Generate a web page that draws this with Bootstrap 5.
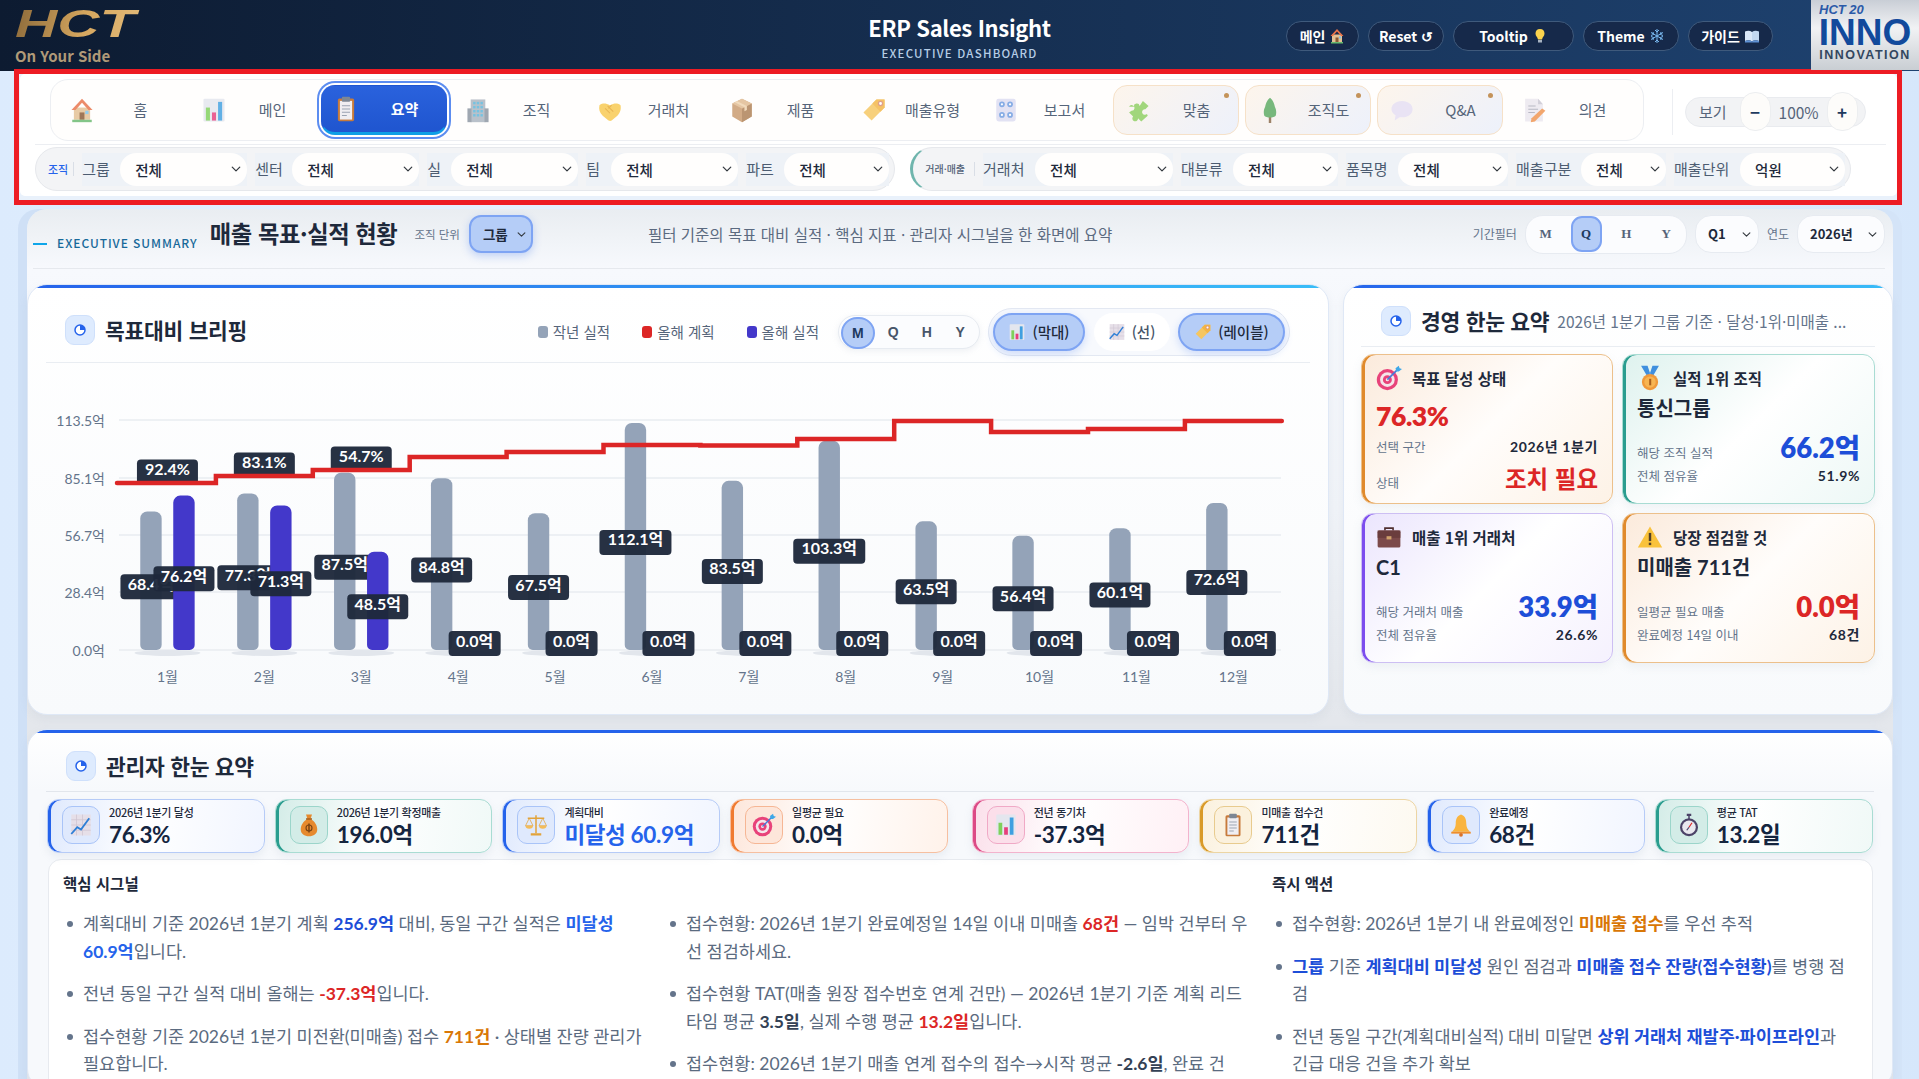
<!DOCTYPE html>
<html lang="ko">
<head>
    <meta charset="UTF-8">
    <title>ERP Sales Insight</title>
    <link href="https://cdn.jsdelivr.net/npm/bootstrap@5.3.0/dist/css/bootstrap.min.css" rel="stylesheet">
    <style>
        html, body { height: 1079px; overflow: hidden; }
        body {
            font-family: "Lato", "Noto Sans CJK KR", sans-serif;
            color: #1e293b;
            background: linear-gradient(90deg, #dcebfd, #e4effd 20%, #e4effd 80%, #d6e7fb);
        }
        /* top bar */
        .topbar { height: 71px; background: linear-gradient(90deg, #0d1b31, #1e4270); color: #fff; }
        .brand-side { flex: 1 1 0; min-width: 0; }
        .hct-word { font: italic 700 39px/28px "Liberation Sans", sans-serif; letter-spacing: 0; background: linear-gradient(100deg, #8c6a3a, #d6a75f 55%, #e3bb7a); -webkit-background-clip: text; background-clip: text; color: transparent; margin: 10px 0 0 15px; width: 84px; transform: scaleX(1.5); transform-origin: left; }
        .hct-sub { font: 700 15px/18px "Noto Sans CJK KR", sans-serif; color: #b09a78; padding-left: 15px; margin-top: 9px; }
        .app-title { font: 700 22px/30px "Noto Sans CJK KR", sans-serif; text-align: center; margin-top: 12px; letter-spacing: -.35px; }
        .app-sub { font: 500 11.5px/14px "Noto Sans CJK KR", sans-serif; letter-spacing: 1.2px; color: #b6cde6; text-align: center; margin-top: 4px; }
        .top-group { gap: 9px; margin-top: 21px; }
        .top-btn { height: 30px; border: 1px solid #3f5a7c; background: #16294a; color: #fff; border-radius: 15px; padding: 0; font: 700 14px/28px "Noto Sans CJK KR", sans-serif; display: flex; align-items: center; gap: 4px; justify-content: center; }
        .top-btn svg { width: 16px; height: 18px; }
        .w73 { width: 73px; } .w76b { width: 76px; } .w121 { width: 121px; } .w96 { width: 96px; } .w85 { width: 85px; }
        .inno-logo { width: 108px; height: 70px; background: linear-gradient(#c9ced6, #f1f2f4 40%, #c9ced3); text-align: center; color: #1b3f8f; margin-left: 38px; }
        .inno-top { font: italic 700 13px/14px "Liberation Sans", sans-serif; text-align: left; padding: 3px 0 0 8px; color: #2b5aa8; }
        .inno-big { font: 800 37px/32px "Liberation Sans", sans-serif; color: #124a9c; letter-spacing: 0; }
        .inno-mid { font: 700 12.5px/13px "Liberation Sans", sans-serif; letter-spacing: 1.5px; color: #33475f; }
        /* toolbar */
        .tool-frame { margin: -2px 17px 0 14px; border: 5px solid #ed1c24; height: 136px; background: #e9f1fb; }
        .tool-panel { height: 122px; margin-left: 1px; background: #fff; border-radius: 5px; }
        .tab-row { height: 70px; padding: 5px 0 0 30px; }
        .tab-wrap { width: 1594px; height: 62px; border: 1px solid #eceef2; border-radius: 18px; padding-left: 6px; gap: 6px; background: #fffefd; }
        .tab-item { width: 126px; height: 50px; border: 1px solid transparent; border-radius: 14px; padding: 0 0 0 11px; display: flex; align-items: center; color: #56657a; font: 400 15px/20px "Noto Sans CJK KR", sans-serif; background: transparent; }
        .tab-item svg { width: 26px; height: 30px; flex: none; opacity: .82; }
        .tab-item span { flex: 1; text-align: center; padding-left: 4px; }
        .tab-on { background: linear-gradient(#2a62dd, #1f55cf); color: #fff; font-weight: 700; box-shadow: 0 0 0 2px #fff, 0 0 0 4px #5c8df0; border-bottom: 3px solid #0e9fe6; }
        .tab-on svg { opacity: 1; }
        .tab-soft { background: linear-gradient(135deg, #fdf5ec, #edf1fb); border-color: #f6e1c8; position: relative; }
        .tab-soft::after { content: ""; position: absolute; top: 7px; right: 9px; width: 5px; height: 5px; border-radius: 50%; background: #c4935a; }
        .view-sep { width: 1px; height: 46px; background: #eceef2; margin: 0 12px 0 28px; }
        .view-pill { width: 181px; height: 30px; background: #f2f3f5; border: 1px solid #e9ebef; border-radius: 15px; color: #56657a; font: 400 15px/28px "Noto Sans CJK KR", sans-serif; padding-left: 13px; }
        .view-btn { width: 31px; height: 39px; border-radius: 15px; background: #fdfcfa; border: 1px solid #eceef0; font: 700 17px/1 "Noto Sans CJK KR", sans-serif; color: #1e3a5f; padding: 0; margin-left: 13px; }
        .view-btn.plus { margin-left: 0; }
        .view-val { width: 56px; text-align: center; font-size: 15.5px; }
        .tool-line { height: 1px; background: #eceef2; margin: 0 11px 2px 15px; }
        .filter-row { padding-left: 15px; gap: 15px; }
        .filter-box { height: 44px; background: #f3f4f6; border: 1px solid #e6e8ec; border-radius: 22px; padding: 0 5px 0 12px; gap: 8px; }
        .filter-box.deal { border-left: 3px solid #6fb5ad; }
        .filter-tag { color: #2563eb; font: 500 11px/14px "Noto Sans CJK KR", sans-serif; padding-right: 5px; border-right: 1px solid #d9dee6; white-space: nowrap; }
        .filter-box.deal .filter-tag { color: #56657a; font-size: 10px; padding-right: 9px; }
        .filter-cell { height: 33px; background: #eef2f7; display: flex; align-items: center; color: #4c5c71; font: 400 15px/20px "Noto Sans CJK KR", sans-serif; white-space: nowrap; }
        .filter-cell label { flex: 1; }
        .sel-fill { height: 33px; border: 0; border-radius: 16px; padding: 0 20px 0 15px; font: 500 14.5px/33px "Noto Sans CJK KR", sans-serif; color: #1e293b; background-color: #fffefd; background-position: right 5px center; background-size: 12px 10px; }
        .c165 { width: 165px; } .c164 { width: 164px; } .c151 { width: 151px; } .c152 { width: 152px; } .c143 { width: 143px; }
        .c190 { width: 190px; } .c157 { width: 157px; } .c162 { width: 162px; } .c150 { width: 150px; } .c171 { width: 171px; }
        .s127 { width: 127px; } .s85 { width: 85px; } .s105 { width: 105px; } .s110 { width: 110px; } .s138 { width: 138px; }
        /* main */
        .main-wrap { margin: 4px 26px 0 27px; background: linear-gradient(#e9edf1, #f7f9fd 60px, #f0f3f8 300px, #e4e7ec 510px); border-radius: 20px 20px 0 0; box-shadow: -9px 0 0 #cfe0f6, 9px 0 0 #d4e4f8; height: 870px; }
        .sum-row { height: 60px; margin: 0 8px 0 6px; border-bottom: 1px solid #e6e9ee; padding-bottom: 9px; }
        .sum-eyebrow { font: 500 12px/16px "Noto Sans CJK KR", sans-serif; letter-spacing: .95px; color: #17699a; margin-top: 17px; white-space: nowrap; }
        .sum-eyebrow::before { content: ""; display: inline-block; width: 14px; height: 2px; background: #0ea5e9; vertical-align: middle; margin-right: 10px; }
        .sum-title { font: 700 23.3px/30px "Noto Sans CJK KR", sans-serif; margin: -3px 0 0 12px; letter-spacing: -.4px; white-space: nowrap; }
        .sum-unit { color: #64748b; font: 400 11.5px/16px "Noto Sans CJK KR", sans-serif; margin-left: 17px; white-space: nowrap; }
        .sel-blue { width: 64px; height: 38px; border: 2px solid #7ea4f3; border-radius: 12px; background-color: #b5cdf7; font: 700 13.5px/34px "Noto Sans CJK KR", sans-serif; padding: 0 16px 0 12px; margin-left: 9px; background-position: right 4px center; background-size: 11px 9px; color: #1e293b; box-shadow: 0 3px 8px rgba(37,99,235,.25); }
        .sum-desc { color: #5b6a80; font: 400 15.5px/20px "Noto Sans CJK KR", sans-serif; margin-left: 115px; white-space: nowrap; width: 465px; }
        .sum-right { margin-left: auto; font: 400 12px/16px "Noto Sans CJK KR", sans-serif; color: #64748b; gap: 8px; }
        .seg-round { background: #fbfcfe; border: 1px solid #e7ebf1; border-radius: 18px; padding: 0; height: 39px; width: 162px; align-items: center; }
        .seg-round b { width: 40.5px; height: 34px; text-align: center; font: 700 13px/34px "Liberation Serif", serif; color: #55647a; display: block; }
        .seg-round b.on { flex: none; width: 31px; margin: 0 5px; height: 36px; background: #b5cdf7; border: 2px solid #7ea4f3; border-radius: 11px; line-height: 32px; color: #1e3a5f; }
        .sel-plain { height: 38px; border: 1px solid #e7ebf1; border-radius: 16px; font: 700 13px/36px "Noto Sans CJK KR", sans-serif; padding: 0 20px 0 12px; background-color: #fbfcfe; background-position: right 6px center; background-size: 11px 9px; color: #1e293b; }
        .w64 { width: 64px; } .w88 { width: 88px; }
        .panel-row { padding-top: 15px; gap: 14px; }
        .glass-card { background: linear-gradient(90deg, #2563eb, #38bdf8) top / 100% 3px no-repeat, linear-gradient(#fff, #f8fafc); border: 1px solid #dfe8f6; border-radius: 20px; box-shadow: 0 4px 10px rgba(148,163,184,.12); }
        .chart-card { width: 1302px; height: 431px; }
        .brief-card { width: 550px; height: 431px; }
        .card-top { height: 78px; margin: 0 18px; border-bottom: 1px solid #e9edf2; padding: 13px 20px 0 19px; }
        .pie-box { width: 30px; height: 30px; background: #deebfe; border: 1px solid #cfe0fb; border-radius: 9px; display: flex; align-items: center; justify-content: center; flex: none; }
        .pie-box svg { width: 12px; height: 12px; }
        .card-name { font: 700 21.5px/28px "Noto Sans CJK KR", sans-serif; margin-left: 10px; letter-spacing: -.3px; white-space: nowrap; }
        .legend-it { font: 400 14.5px/18px "Noto Sans CJK KR", sans-serif; color: #56657a; display: flex; align-items: center; gap: 5px; margin-right: 32px; white-space: nowrap; }
        .legend-it i { width: 10px; height: 12px; border-radius: 3px; display: block; }
        .seg-month { width: 142px; height: 34px; border: 1px solid #e7ebf1; border-radius: 17px; padding: 2px; margin: 0 8px 0 -13px; background: #fbfcfe; box-shadow: 0 2px 6px rgba(148,163,184,.15); }
        .seg-month b { width: 33.5px; text-align: center; font: 700 14px/28px "Liberation Sans", sans-serif; color: #475569; display: block; }
        .seg-month b.on { height: 32px; line-height: 28px; background: #b5cdf7; border: 2px solid #7ea4f3; border-radius: 16px; color: #1e3a5f; margin: -1px 2px 0 0; }
        .seg-view { width: 302px; height: 48px; border: 1px solid #e3e8f2; border-radius: 24px; padding: 0 4px; justify-content: space-between; background: #f7f9fd; }
        .view-tog { height: 38px; border-radius: 19px; border: 0; background: #fff; font: 500 14.5px/34px "Noto Sans CJK KR", sans-serif; color: #475569; padding: 0; display: flex; align-items: center; justify-content: center; gap: 6px; }
        .view-tog.on { background: #b5cdf7; border: 2px solid #7ea4f3; color: #1e293b; box-shadow: 0 3px 8px rgba(37,99,235,.2); }
        .view-tog svg { width: 18px; height: 20px; }
        .w92 { width: 92px; } .w76 { width: 76px; } .w107 { width: 107px; }
        .chart-svg { display: block; font-family: "Lato", "Noto Sans CJK KR", sans-serif; }
        .bg-legend-a { background: #94a3b8; } .bg-legend-b { background: #dc2626; } .bg-legend-c { background: #4338ca; }
        .brief-top { height: 62px; margin: 0 17px; border-bottom: 1px solid #e9edf2; padding: 11px 0 0 20px; }
        .brief-sub { font: 400 15.5px/20px "Noto Sans CJK KR", sans-serif; color: #64748b; margin-left: 8px; white-space: nowrap; }
        .tile-grid { display: grid; grid-template-columns: 252px 253px; gap: 9px 9px; padding: 7px 0 0 17px; }
        .tile { height: 150px; border: 1px solid; border-radius: 12px; padding: 10px 14px; box-shadow: 0 4px 10px rgba(148,163,184,.12), inset 3px 0 0 var(--edge); }
        .tile-amber { --edge: #e08a2c; border-color: #ecc08b; background: linear-gradient(135deg, #fbeadb, #fffdfb 50%, #fdf2e6); }
        .tile-teal { --edge: #2a9d8f; border-color: #a9dcd3; background: linear-gradient(135deg, #def2ee, #fff 50%, #edf8f6); }
        .tile-violet { --edge: #7c4dee; border-color: #cdbff3; background: linear-gradient(135deg, #ebe5fd, #fff 50%, #f5f1fe); }
        .tile-head { display: flex; align-items: center; gap: 10px; font: 700 15.5px/24px "Noto Sans CJK KR", sans-serif; height: 26px; }
        .tile-head svg { width: 26px; height: 26px; flex: none; }
        .tile-big { font: 800 26.5px/34px "Lato", "Noto Sans CJK KR", sans-serif; color: #dc2626; margin-top: 8px; letter-spacing: -.4px; }
        .tile-name { font: 700 20px/28px "Lato", "Noto Sans CJK KR", sans-serif; margin-top: 3px; height: 36px; }
        .tile-line { display: flex; justify-content: space-between; align-items: baseline; font: 400 12.5px/16px "Noto Sans CJK KR", sans-serif; color: #64748b; white-space: nowrap; }
        .tile-line b { font: 700 14px/20px "Lato", "Noto Sans CJK KR", sans-serif; color: #1e293b; letter-spacing: .6px; }
        .tile-gap { margin-top: 4px; }
        .tile-line .hot { font: 700 23.5px/34px "Noto Sans CJK KR", sans-serif; color: #dc2626; letter-spacing: 0; }
        .tile-line .num { font: 800 27.5px/36px "Lato", "Noto Sans CJK KR", sans-serif; color: #1d4ed8; letter-spacing: 0; }
        .tile-line .num.red { color: #dc2626; }
        /* admin */
        .admin-card { height: 360px; margin-top: 14px; background: linear-gradient(90deg, #2563eb, #2563eb) top / 100% 3px no-repeat, linear-gradient(#fff, #f7f9fc 60px); }
        .admin-top { height: 62px; margin: 0 18px; border-bottom: 1px solid #e2e6ec; padding: 11px 0 0 20px; }
        .kpi-row { padding: 7px 0 0 19px; gap: 10px; }
        .kpi-box { width: 217.7px; height: 54px; border: 1px solid; border-radius: 12px; padding: 6px 0 0 14px; display: flex; gap: 9px; background: linear-gradient(100deg, var(--tint), #fff 45%, var(--tint2)); box-shadow: inset 3px 0 0 var(--edge), 0 4px 8px rgba(148,163,184,.14); }
        .kpi-gap { margin-left: 14px; }
        .kpi-ico { width: 38px; height: 38px; border-radius: 10px; border: 1px solid var(--edge2); background: var(--tint); display: flex; align-items: center; justify-content: center; flex: none; }
        .kpi-ico svg { width: 24px; height: 28px; }
        .kpi-lab { font: 500 11px/14px "Noto Sans CJK KR", sans-serif; letter-spacing: -.3px; white-space: nowrap; margin-top: -1px; }
        .kpi-val { font: 700 22.5px/26px "Lato", "Noto Sans CJK KR", sans-serif; color: #15253f; white-space: nowrap; letter-spacing: -.35px; margin-top: 3px; }
        .kb { --edge: #2563eb; --edge2: #a9c4f8; --tint: #dfe9fd; --tint2: #f1f5ff; border-color: #b6cbf7; }
        .kt { --edge: #2a9d8f; --edge2: #9bd5ca; --tint: #d3ece7; --tint2: #f0f9f7; border-color: #a9dcd3; }
        .ko { --edge: #f07a30; --edge2: #f6b694; --tint: #fde6da; --tint2: #fff2ea; border-color: #f6bfa0; }
        .kp { --edge: #dc4a86; --edge2: #f0a9c6; --tint: #fbdfea; --tint2: #fff0f5; border-color: #f3b3cd; }
        .ky { --edge: #d99a28; --edge2: #e8cb8e; --tint: #fbf1dd; --tint2: #fdf9f0; border-color: #ecd5a4; }
        .sig-box { margin: 6px 19px 0 20px; height: 260px; background: #fff; border: 1px solid #e7eaef; border-radius: 13px 13px 0 0; padding: 11px 14px 0 14px; }
        .sig-col1 { width: 586px; margin-right: 17px; } .sig-col2 { width: 582px; margin-right: 24px; } .sig-col3 { width: 577px; }
        .sig-name { font: 700 15.5px/24px "Noto Sans CJK KR", sans-serif; height: 25px; color: #1e293b; margin-bottom: 14px; }
        .sig-list { list-style: none; margin: 0; padding: 0 0 0 20px; }
        .sig-list li { position: relative; font: 400 17.5px/27.5px "Lato", "Noto Sans CJK KR", sans-serif; color: #5b6b80; margin-bottom: 15px; }
        .sig-list li::before { content: ""; position: absolute; left: -16px; top: 11px; width: 6px; height: 6px; border-radius: 50%; background: #64748b; }
        .sig-list b { font-weight: 700; }
        .t-blue { color: #1d4ed8; } .t-blue2 { color: #2563eb; } .t-red { color: #dc2626; } .t-or { color: #d97706; } .t-ink { color: #334155; }
    </style>
</head>
<body>
    <svg width="0" height="0" class="d-block" aria-hidden="true">
        <defs>
            <symbol id="i-home" viewBox="0 0 32 32"><rect x="6" y="13" width="20" height="15" fill="#e4c193"/><path d="M16 2 3 16h5l8-9 8 9h5z" fill="#e8734a"/><rect x="13" y="19" width="6" height="9" fill="#8a5a34"/><rect x="20" y="17" width="4" height="4" fill="#7cc3ea"/><rect x="4" y="28" width="24" height="3" fill="#69b96f"/></symbol>
            <symbol id="i-bars" viewBox="0 0 32 32"><rect x="3" y="2" width="26" height="28" rx="1.5" fill="#e4e6ee"/><rect x="6" y="13" width="5" height="16" fill="#7ed05a"/><rect x="13.500" y="19" width="5" height="10" fill="#e63f7c"/><rect x="21" y="6" width="5" height="23" fill="#3f9fe0"/></symbol>
            <symbol id="i-clip" viewBox="0 0 32 32"><rect x="6" y="3" width="20" height="28" rx="2" fill="#c77b3c"/><rect x="8.500" y="6" width="15" height="23" fill="#f0eef2"/><rect x="11" y="1" width="10" height="6" rx="1" fill="#7d8794"/><path d="M11 12h10M11 16h10M11 20h10M11 24h6" stroke="#9aa3b2" stroke-width="1.300"/></symbol>
            <symbol id="i-tower" viewBox="0 0 32 32"><rect x="7" y="3" width="18" height="28" fill="#aab4bf"/><rect x="3" y="14" width="5" height="17" fill="#8b95a1"/><rect x="24" y="14" width="5" height="17" fill="#8b95a1"/><g fill="#59b6dc"><rect x="10" y="6" width="3" height="3"/><rect x="14.500" y="6" width="3" height="3"/><rect x="19" y="6" width="3" height="3"/><rect x="10" y="11" width="3" height="3"/><rect x="14.500" y="11" width="3" height="3"/><rect x="19" y="11" width="3" height="3"/><rect x="10" y="16" width="3" height="3"/><rect x="14.500" y="16" width="3" height="3"/><rect x="19" y="16" width="3" height="3"/><rect x="10" y="21" width="3" height="3"/><rect x="14.500" y="21" width="3" height="3"/><rect x="19" y="21" width="3" height="3"/></g></symbol>
            <symbol id="i-shake" viewBox="0 0 32 32"><path d="M3 10c5-3 8-2 13 0 5-2 8-3 13 0 1 6-1 10-5 14l-6 5c-2 1-4 0-5-1l-6-5C3 19 2 15 3 10z" fill="#f8c94e"/><path d="M10 14l6 6M13 11l7 7M18 10l-4 4" stroke="#e4a52e" stroke-width="1.300" fill="none"/></symbol>
            <symbol id="i-box" viewBox="0 0 32 32"><path d="M16 2 28 8v16l-12 7-12-7V8z" fill="#c99a6c"/><path d="M16 14v17l12-7V8z" fill="#ad7f54"/><path d="M16 14 4 8l12-6 12 6z" fill="#e0ba90"/><path d="M9.500 5 22 11v5l-3 1.500V12.500L7 6.500z" fill="#eed3ae"/></symbol>
            <symbol id="i-tag" viewBox="0 0 32 32"><path d="M19 3h10v10L13 29 3 19z" fill="#f6c660"/><path d="M19 3h10v10L24 18 14 8z" fill="#f3b545"/><circle cx="24" cy="8" r="2.500" fill="#fff" stroke="#d98b72" stroke-width="1.500"/></symbol>
            <symbol id="i-knobs" viewBox="0 0 32 32"><rect x="4" y="2" width="24" height="28" rx="3" fill="#dcdcf2"/><g fill="#6c9be0"><circle cx="11" cy="9" r="3.500"/><circle cx="21" cy="9" r="3.500"/><circle cx="11" cy="22" r="3.500"/><circle cx="21" cy="22" r="3.500"/></g><g fill="#fff"><circle cx="11" cy="9" r="1.400"/><circle cx="21" cy="9" r="1.400"/><circle cx="11" cy="22" r="1.400"/><circle cx="21" cy="22" r="1.400"/></g></symbol>
            <symbol id="i-puzzle" viewBox="0 0 32 32"><path d="M5 12h6a3.500 3.500 0 1 1 7 -1l4-6 7 6-4 4a3.500 3.500 0 1 0 2 6l1 2-8 7-4-4a3.500 3.500 0 1 1-6-2l-5-5 3-2a3.500 3.500 0 1 0-3-5z" fill="#8ed063"/></symbol>
            <symbol id="i-tree" viewBox="0 0 32 32"><rect x="14.500" y="24" width="3" height="8" fill="#8a6a4a"/><path d="M16 1c4 3 5 7 6 11 2 4 2 8 1 11-2 3-12 3-14 0-1-3-1-7 1-11 1-4 2-8 6-11z" fill="#5bab63"/></symbol>
            <symbol id="i-bubble" viewBox="0 0 32 32"><path d="M16 5c8 0 13 4.500 13 10s-5 10-13 10c-1 0-2 0-3-.2L7 29l1-6.500C5 20.500 3 18 3 15 3 9.500 8 5 16 5z" fill="#e6e0f5"/></symbol>
            <symbol id="i-memo" viewBox="0 0 32 32"><path d="M5 2h16l6 7v21H5z" fill="#ebe8ef"/><path d="M21 2v7h6z" fill="#c9c6d2"/><path d="M9 11h9M9 15h12M9 19h8" stroke="#a9a9b8" stroke-width="1.300"/><path d="M26 14l4 3-13 13-5 1 1-5z" fill="#f0934e"/></symbol>
            <symbol id="i-target" viewBox="0 0 32 32"><circle cx="14" cy="18" r="13" fill="#e8437a"/><circle cx="14" cy="18" r="9" fill="#f5e6ea"/><circle cx="14" cy="18" r="5.500" fill="#e8437a"/><circle cx="14" cy="18" r="2" fill="#f5e6ea"/><path d="M14 18 27 5" stroke="#4a7ad6" stroke-width="2"/><path d="M24 4l4-3 1 3 3 1-4 3h-3z" fill="#3fa8e8"/></symbol>
            <symbol id="i-medal" viewBox="0 0 32 32"><path d="M5 1h8l4 12h-5zM27 1h-8l-4 12h5z" fill="#3f8fde"/><circle cx="16" cy="21" r="10" fill="#f0993a"/><circle cx="16" cy="21" r="7" fill="#f7b552"/><rect x="15" y="17" width="2.500" height="8" fill="#a85f1c"/></symbol>
            <symbol id="i-case" viewBox="0 0 32 32"><path d="M11 8V5h10v3" fill="none" stroke="#4f2f2f" stroke-width="2"/><rect x="2" y="8" width="28" height="21" rx="2" fill="#7c4a4a"/><rect x="2" y="8" width="28" height="9" fill="#6a3d3d"/><rect x="13" y="15" width="6" height="4" fill="#d0a16b"/></symbol>
            <symbol id="i-warn" viewBox="0 0 32 32"><path d="M16 3 31 29H1z" fill="#f9c23c"/><rect x="14.500" y="11" width="3" height="10" fill="#51402a"/><rect x="14.500" y="23" width="3" height="3" fill="#51402a"/></symbol>
            <symbol id="i-line" viewBox="0 0 32 32"><rect x="3" y="2" width="26" height="28" fill="#e6dfe8"/><path d="M3 9h26M3 16h26M3 23h26M10 2v28M18 2v28" stroke="#cfc4d2"/><path d="M3 28 11 19l5 3L27 7" stroke="#2f7fd6" stroke-width="2.500" fill="none"/></symbol>
            <symbol id="i-bag" viewBox="0 0 32 32"><path d="M12 2h8l-2 6c6 3 9 9 9 14 0 6-5 9-11 9S5 28 5 22c0-5 3-11 9-14z" fill="#e68a2e"/><rect x="12" y="7" width="8" height="2" fill="#a85f1c"/><rect x="15" y="14" width="2" height="12" fill="#7a4413"/><circle cx="16" cy="20" r="4" fill="none" stroke="#7a4413" stroke-width="1.500"/></symbol>
            <symbol id="i-scale" viewBox="0 0 32 32"><rect x="15" y="3" width="2" height="24" fill="#e2a33b"/><rect x="5" y="6" width="22" height="2" fill="#e2a33b"/><rect x="9" y="27" width="14" height="3" fill="#e2a33b"/><path d="M2 17h10l-5-10zM20 17h10l-5-10z" fill="none" stroke="#e2a33b"/><path d="M2 17h10a5 4 0 0 1-10 0zM20 17h10a5 4 0 0 1-10 0z" fill="#f3bc5a"/></symbol>
            <symbol id="i-bell" viewBox="0 0 32 32"><path d="M16 2c6 2 7 7 7 12 0 5 2 8 5 11H4c3-3 5-6 5-11 0-5 1-10 7-12z" fill="#f9b43f"/><rect x="3" y="25" width="26" height="2.500" fill="#ef8e2d"/><circle cx="16" cy="29" r="2.500" fill="#d9722a"/></symbol>
            <symbol id="i-watch" viewBox="0 0 32 32"><rect x="13" y="1" width="6" height="3" fill="#4c4368"/><rect x="15" y="4" width="2" height="4" fill="#4c4368"/><circle cx="16" cy="19" r="12" fill="#4c4368"/><circle cx="16" cy="19" r="9" fill="#e9e8ef"/><path d="M16 19l4-6" stroke="#dc2626" stroke-width="1.600"/><path d="M16 19l-3 4" stroke="#4c4368" stroke-width="1.600"/></symbol>
            <symbol id="i-snow" viewBox="0 0 32 32"><path d="M16 2v28M4 9l24 14M4 23 28 9M12 4l4 4 4-4M12 28l4-4 4 4M4 15l5-2-1-5M28 17l-5 2 1 5M4 17l5 2-1 5M28 15l-5-2 1-5" stroke="#79b9f0" stroke-width="2" fill="none"/></symbol>
            <symbol id="i-bulb" viewBox="0 0 32 32"><path d="M16 2c6 0 9 4 9 9 0 5-4 7-5 12h-8c-1-5-5-7-5-12 0-5 3-9 9-9z" fill="#fbd34d"/><rect x="12" y="24" width="8" height="5" fill="#a8b3c2"/></symbol>
            <symbol id="i-book" viewBox="0 0 32 32"><path d="M2 7c5-2 10-2 14 1v19c-4-3-9-3-14-1z" fill="#d9e7f8"/><path d="M30 7c-5-2-10-2-14 1v19c4-3 9-3 14-1z" fill="#c2d7f0"/><path d="M2 26c5-2 10-2 14 1 4-3 9-3 14-1v3H2z" fill="#5f92d6"/></symbol>
            <symbol id="i-pie" viewBox="0 0 24 24"><circle cx="12" cy="12" r="10" fill="#fff" stroke="#2563eb" stroke-width="3"/><path d="M12 12V2a10 10 0 0 1 10 10z" fill="#2563eb"/></symbol>
        </defs>
    </svg>

    <!-- Top bar -->
    <header class="topbar d-flex">
        <div class="brand-side">
            <div class="hct-word">HCT</div>
            <div class="hct-sub">On Your Side</div>
        </div>
        <div>
            <div class="app-title">ERP Sales Insight</div>
            <div class="app-sub">EXECUTIVE DASHBOARD</div>
        </div>
        <div class="brand-side d-flex justify-content-end">
            <div class="top-group d-flex align-self-start">
                <button class="top-btn w73">메인 <svg><use href="#i-home"/></svg></button>
                <button class="top-btn w76b">Reset ↺</button>
                <button class="top-btn w121">Tooltip <svg><use href="#i-bulb"/></svg></button>
                <button class="top-btn w96">Theme <svg><use href="#i-snow"/></svg></button>
                <button class="top-btn w85">가이드 <svg><use href="#i-book"/></svg></button>
            </div>
            <div class="inno-logo">
                <div class="inno-top">HCT 20</div>
                <div class="inno-big">INNO</div>
                <div class="inno-mid">INNOVATION</div>
            </div>
        </div>
    </header>

    <!-- Tabs + filters -->
    <div class="tool-frame">
        <div class="tool-panel">
            <div class="tab-row d-flex">
                <div class="tab-wrap d-flex align-items-center" id="tabWrap"></div>
                <div class="view-sep align-self-center"></div>
                <div class="view-pill d-flex align-items-center align-self-center">
                    <span>보기</span>
                    <button class="view-btn">−</button>
                    <span class="view-val">100%</span>
                    <button class="view-btn plus">+</button>
                </div>
            </div>
            <div class="tool-line"></div>
            <div class="filter-row d-flex">
                <div class="filter-box d-flex align-items-center">
                    <span class="filter-tag">조직</span>
                    <div class="filter-cell c165"><label>그룹</label><select class="form-select sel-fill s127"><option>전체</option></select></div>
                    <div class="filter-cell c164"><label>센터</label><select class="form-select sel-fill s127"><option>전체</option></select></div>
                    <div class="filter-cell c151"><label>실</label><select class="form-select sel-fill s127"><option>전체</option></select></div>
                    <div class="filter-cell c152"><label>팀</label><select class="form-select sel-fill s127"><option>전체</option></select></div>
                    <div class="filter-cell c143"><label>파트</label><select class="form-select sel-fill s105"><option>전체</option></select></div>
                </div>
                <div class="filter-box deal d-flex align-items-center">
                    <span class="filter-tag">거래·매출</span>
                    <div class="filter-cell c190"><label>거래처</label><select class="form-select sel-fill s138"><option>전체</option></select></div>
                    <div class="filter-cell c157"><label>대분류</label><select class="form-select sel-fill s105"><option>전체</option></select></div>
                    <div class="filter-cell c162"><label>품목명</label><select class="form-select sel-fill s110"><option>전체</option></select></div>
                    <div class="filter-cell c150"><label>매출구분</label><select class="form-select sel-fill s85"><option>전체</option></select></div>
                    <div class="filter-cell c171"><label>매출단위</label><select class="form-select sel-fill s105"><option>억원</option></select></div>
                </div>
            </div>
        </div>
    </div>

    <main class="main-wrap">
        <!-- Page heading -->
        <div class="sum-row d-flex align-items-center">
            <div class="sum-eyebrow">EXECUTIVE SUMMARY</div>
            <div class="sum-title">매출 목표·실적 현황</div>
            <div class="sum-unit">조직 단위</div>
            <select class="form-select sel-blue"><option>그룹</option></select>
            <div class="sum-desc">필터 기준의 목표 대비 실적 · 핵심 지표 · 관리자 시그널을 한 화면에 요약</div>
            <div class="sum-right d-flex align-items-center">
                <span>기간필터</span>
                <div class="seg-round d-flex"><b>M</b><b class="on">Q</b><b>H</b><b>Y</b></div>
                <select class="form-select sel-plain w64"><option>Q1</option></select>
                <span>연도</span>
                <select class="form-select sel-plain w88"><option>2026년</option></select>
            </div>
        </div>

        <div class="panel-row d-flex">
            <!-- Chart -->
            <section class="glass-card chart-card">
                <div class="card-top d-flex align-items-center">
                    <div class="pie-box"><svg><use href="#i-pie"/></svg></div>
                    <div class="card-name">목표대비 브리핑</div>
                    <div class="d-flex align-items-center ms-auto mt-1">
                        <span class="legend-it"><i class="bg-legend-a"></i>작년 실적</span>
                        <span class="legend-it"><i class="bg-legend-b"></i>올해 계획</span>
                        <span class="legend-it"><i class="bg-legend-c"></i>올해 실적</span>
                        <div class="seg-month d-flex"><b class="on">M</b><b>Q</b><b>H</b><b>Y</b></div>
                        <div class="seg-view d-flex align-items-center">
                            <button class="view-tog on w92"><svg><use href="#i-bars"/></svg>(막대)</button>
                            <button class="view-tog w76"><svg><use href="#i-line"/></svg>(선)</button>
                            <button class="view-tog on w107"><svg><use href="#i-tag"/></svg>(레이블)</button>
                        </div>
                    </div>
                </div>
                <svg id="chart" class="chart-svg" width="1300" height="350"></svg>
            </section>

            <!-- Executive brief -->
            <section class="glass-card brief-card">
                <div class="brief-top d-flex align-items-center">
                    <div class="pie-box"><svg><use href="#i-pie"/></svg></div>
                    <div class="card-name">경영 한눈 요약</div>
                    <div class="brief-sub">2026년 1분기 그룹 기준 · 달성·1위·미매출 ...</div>
                </div>
                <div class="tile-grid">
                    <div class="tile tile-amber">
                        <div class="tile-head"><svg><use href="#i-target"/></svg>목표 달성 상태</div>
                        <div class="tile-big">76.3%</div>
                        <div class="tile-line mt-1"><span>선택 구간</span><b>2026년 1분기</b></div>
                        <div class="tile-line tile-gap"><span>상태</span><b class="hot">조치 필요</b></div>
                    </div>
                    <div class="tile tile-teal">
                        <div class="tile-head"><svg><use href="#i-medal"/></svg>실적 1위 조직</div>
                        <div class="tile-name">통신그룹</div>
                        <div class="tile-line"><span>해당 조직 실적</span><b class="num">66.2억</b></div>
                        <div class="tile-line"><span>전체 점유율</span><b>51.9%</b></div>
                    </div>
                    <div class="tile tile-violet">
                        <div class="tile-head"><svg><use href="#i-case"/></svg>매출 1위 거래처</div>
                        <div class="tile-name">C1</div>
                        <div class="tile-line"><span>해당 거래처 매출</span><b class="num">33.9억</b></div>
                        <div class="tile-line"><span>전체 점유율</span><b>26.6%</b></div>
                    </div>
                    <div class="tile tile-amber">
                        <div class="tile-head"><svg><use href="#i-warn"/></svg>당장 점검할 것</div>
                        <div class="tile-name">미매출 711건</div>
                        <div class="tile-line"><span>일평균 필요 매출</span><b class="num red">0.0억</b></div>
                        <div class="tile-line"><span>완료예정 14일 이내</span><b>68건</b></div>
                    </div>
                </div>
            </section>
        </div>

        <!-- Admin summary -->
        <section class="glass-card admin-card">
            <div class="admin-top d-flex align-items-center">
                <div class="pie-box"><svg><use href="#i-pie"/></svg></div>
                <div class="card-name">관리자 한눈 요약</div>
            </div>
            <div class="kpi-row d-flex" id="kpiRow"></div>
            <div class="sig-box d-flex">
                <div class="sig-col1">
                    <div class="sig-name">핵심 시그널</div>
                    <ul class="sig-list">
                        <li>계획대비 기준 2026년 1분기 계획 <b class="t-blue">256.9억</b> 대비, 동일 구간 실적은 <b class="t-blue2">미달성 60.9억</b>입니다.</li>
                        <li>전년 동일 구간 실적 대비 올해는 <b class="t-red">-37.3억</b>입니다.</li>
                        <li>접수현황 기준 2026년 1분기 미전환(미매출) 접수 <b class="t-or">711건</b> · 상태별 잔량 관리가 필요합니다.</li>
                    </ul>
                </div>
                <div class="sig-col2">
                    <div class="sig-name">&nbsp;</div>
                    <ul class="sig-list">
                        <li>접수현황: 2026년 1분기 완료예정일 14일 이내 미매출 <b class="t-red">68건</b> — 임박 건부터 우선 점검하세요.</li>
                        <li>접수현황 TAT(매출 원장 접수번호 연계 건만) — 2026년 1분기 기준 계획 리드타임 평균 <b class="t-ink">3.5일</b>, 실제 수행 평균 <b class="t-red">13.2일</b>입니다.</li>
                        <li>접수현황: 2026년 1분기 매출 연계 접수의 접수→시작 평균 <b class="t-ink">-2.6일</b>, 완료 건</li>
                    </ul>
                </div>
                <div class="sig-col3">
                    <div class="sig-name">즉시 액션</div>
                    <ul class="sig-list">
                        <li>접수현황: 2026년 1분기 내 완료예정인 <b class="t-or">미매출 접수</b>를 우선 추적</li>
                        <li><b class="t-blue">그룹</b> 기준 <b class="t-blue">계획대비 미달성</b> 원인 점검과 <b class="t-blue">미매출 접수 잔량(접수현황)</b>를 병행 점검</li>
                        <li>전년 동일 구간(계획대비실적) 대비 미달면 <b class="t-blue">상위 거래처 재발주·파이프라인</b>과 긴급 대응 건을 추가 확보</li>
                    </ul>
                </div>
            </div>
        </section>
    </main>

    <script>
        // Tabs
        const tabs = [['home','홈'],['bars','메인'],['clip','요약','tab-on'],['tower','조직'],['shake','거래처'],['box','제품'],['tag','매출유형'],['knobs','보고서'],
            ['puzzle','맞춤','tab-soft'],['tree','조직도','tab-soft'],['bubble','Q&A','tab-soft'],['memo','의견']];
        document.getElementById('tabWrap').innerHTML = tabs.map(t =>
            `<button class="tab-item ${t[2] || ''}"><svg><use href="#i-${t[0]}"/></svg><span>${t[1]}</span></button>`).join('');

        // KPI row
        const kpis = [['kb','line','2026년 1분기 달성','76.3%'],['kt','bag','2026년 1분기 확정매출','196.0억'],['kb','scale','계획대비','미달성 60.9억','t-blue2'],['ko','target','일평균 필요','0.0억'],
            ['kp','bars','전년 동기차','-37.3억'],['ky','clip','미매출 접수건','711건'],['kb','bell','완료예정','68건'],['kt','watch','평균 TAT','13.2일']];
        document.getElementById('kpiRow').innerHTML = kpis.map((k, i) =>
            `<div class="kpi-box ${k[0]} ${i === 4 ? 'kpi-gap' : ''}"><div class="kpi-ico"><svg><use href="#i-${k[1]}"/></svg></div><div><div class="kpi-lab">${k[2]}</div><div class="kpi-val ${k[4] || ''}">${k[3]}</div></div></div>`).join('');

        // Chart: numbers below are page coordinates, the group shifts them into the svg
        const last = [68.4,77.3,87.5,84.8,67.5,112.1,83.5,103.3,63.5,56.4,60.1,72.6];
        const now = [76.2,71.3,48.5,0,0,0,0,0,0,0,0,0];
        const plan = [484,477,471,458,453,446,446.5,440,422,433,430,422];
        const pct = [['92.4%',473],['83.1%',466],['54.7%',460]];
        const base = 651, unit = 2.026, left = 119, step = 96.9;
        const cx = i => left + step * (i + .5);
        let g = '';
        [['113.5억',421],['85.1억',479],['56.7억',536],['28.4억',593],['0.0억',651]].forEach(a => {
            g += `<line x1="119" x2="1281" y1="${a[1]}" y2="${a[1]}" stroke="#e9ecf1" stroke-width="1.500"/>`;
            g += `<text x="105" y="${a[1] + 6}" text-anchor="end" font-size="14" fill="#64748b">${a[0]}</text>`;
        });
        last.forEach((v, i) => {
            g += `<ellipse cx="${cx(i)}" cy="654" rx="33" ry="3" fill="#e2e6ec"/>`;
            g += `<text x="${cx(i)}" y="683" text-anchor="middle" font-size="14" fill="#64748b">${i + 1}월</text>`;
        });
        const bar = (x, v, fill) => {
            const h = v * unit;
            return h > 0 ? `<path d="M${x - 10.7} ${base - 5}v${-(h - 12)}a7 7 0 0 1 7 -7h7.400a7 7 0 0 1 7 7v${h - 12}a5 5 0 0 1 -5 5h-11.400a5 5 0 0 1 -5 -5z" fill="${fill}"/>` : '';
        };
        const chip = (x, y, s) => {
            const w = s.length >= 6 ? 72 : s.length === 5 ? 61 : 52;
            return `<rect x="${x - w / 2}" y="${y - 12.5}" width="${w}" height="25" rx="4" fill="#1e293b" fill-opacity=".96"/><text x="${x}" y="${y + 3}" text-anchor="middle" font-size="16" font-weight="700" fill="#fff">${s}</text>`;
        };
        const chipY = v => Math.min(base - v * unit / 2 + 6, 644.5);
        last.forEach((v, i) => {
            g += bar(cx(i) - 16.5, v, '#94a3b8');
            g += chip(cx(i) - 16.5, chipY(v), v.toFixed(1) + '억');
        });
        now.forEach((v, i) => {
            g += bar(cx(i) + 16.5, v, '#4338ca');
            g += chip(cx(i) + 16.5, chipY(v), v.toFixed(1) + '억');
        });
        pct.forEach((p, i) => { g += chip(cx(i), p[1], p[0]); });
        let d = `M117 ${plan[0]}`;
        plan.forEach((y, i) => { d += `V${y}H${left + step * (i + 1)}`; });
        g += `<path d="${d}" fill="none" stroke="#dc2626" stroke-width="4.500" stroke-linecap="round"/>`;
        document.getElementById('chart').innerHTML = `<g transform="translate(-28 -364)">${g}</g>`;
    </script>
    <script src="https://cdn.jsdelivr.net/npm/bootstrap@5.3.0/dist/js/bootstrap.bundle.min.js"></script>
</body>
</html>
